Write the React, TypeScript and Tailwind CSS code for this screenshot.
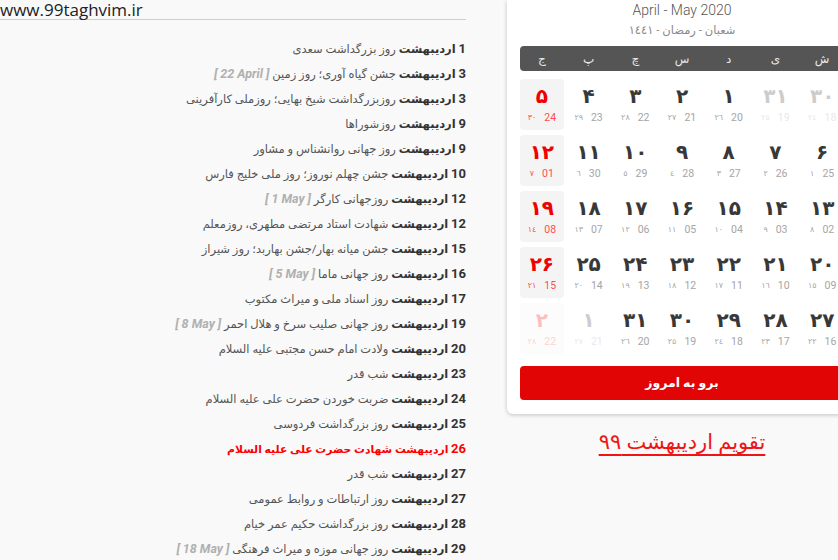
import React from "react";

const FONT = { fontFamily: 'Roboto, "DejaVu Sans", sans-serif' };

type Ev = { d: string; t: string; en?: string; red?: boolean };
const events: Ev[] = [
  { d: "1", t: "روز بزرگداشت سعدی" },
  { d: "3", t: "جشن گیاه آوری؛ روز زمین", en: "22 April" },
  { d: "3", t: "روزبزرگداشت شیخ بهایی؛ روزملی کارآفرینی" },
  { d: "9", t: "روزشوراها" },
  { d: "9", t: "روز جهانی روانشناس و مشاور" },
  { d: "10", t: "جشن چهلم نوروز؛ روز ملی خلیج فارس" },
  { d: "12", t: "روزجهانی کارگر", en: "1 May" },
  { d: "12", t: "شهادت استاد مرتضی مطهری، روزمعلم" },
  { d: "15", t: "جشن میانه بهار/جشن بهاربد؛ روز شیراز" },
  { d: "16", t: "روز جهانی ماما", en: "5 May" },
  { d: "17", t: "روز اسناد ملی و میراث مکتوب" },
  { d: "19", t: "روز جهانی صلیب سرخ و هلال احمر", en: "8 May" },
  { d: "20", t: "ولادت امام حسن مجتبی علیه السلام" },
  { d: "23", t: "شب قدر" },
  { d: "24", t: "ضربت خوردن حضرت علی علیه السلام" },
  { d: "25", t: "روز بزرگداشت فردوسی" },
  { d: "26", t: "شهادت حضرت علی علیه السلام", red: true },
  { d: "27", t: "شب قدر" },
  { d: "27", t: "روز ارتباطات و روابط عمومی" },
  { d: "28", t: "روز بزرگداشت حکیم عمر خیام" },
  { d: "29", t: "روز جهانی موزه و میراث فرهنگی", en: "18 May" },
];

const fa = (n: number) => String(n).replace(/\d/g, (c) => "۰۱۲۳۴۵۶۷۸۹"[+c]);
const ar = (n: number) => String(n).replace(/\d/g, (c) => "٠١٢٣٤٥٦٧٨٩"[+c]);
const g2 = (n: number) => (n < 10 ? "0" + n : String(n));

type Cell = { p: number; g: number; h: number; off?: boolean };
// rows in RTL order: ش ی د س چ پ ج
const rows: Cell[][] = [
  [
    { p: 30, g: 18, h: 24, off: true },
    { p: 31, g: 19, h: 25, off: true },
    { p: 1, g: 20, h: 26 },
    { p: 2, g: 21, h: 27 },
    { p: 3, g: 22, h: 28 },
    { p: 4, g: 23, h: 29 },
    { p: 5, g: 24, h: 30 },
  ],
  [6, 7, 8, 9, 10, 11, 12].map((p, i) => ({ p, g: i < 6 ? 25 + i : 1, h: 1 + i })),
  [13, 14, 15, 16, 17, 18, 19].map((p, i) => ({ p, g: 2 + i, h: 8 + i })),
  [20, 21, 22, 23, 24, 25, 26].map((p, i) => ({ p, g: 9 + i, h: 15 + i })),
  [
    { p: 27, g: 16, h: 22 },
    { p: 28, g: 17, h: 23 },
    { p: 29, g: 18, h: 24 },
    { p: 30, g: 19, h: 25 },
    { p: 31, g: 20, h: 26 },
    { p: 1, g: 21, h: 27, off: true },
    { p: 2, g: 22, h: 28, off: true },
  ],
];

const weekdays = ["ش", "ی", "د", "س", "چ", "پ", "ج"];

function DayCell({ c, fri }: { c: Cell; fri: boolean }) {
  return (
    <div
      className={
        "h-[51px] rounded-[4px] flex flex-col items-center pt-[5px] " +
        (fri ? "bg-[#f4f4f4] " : "") +
        (c.off ? "opacity-[0.25]" : "")
      }
    >
      <div
        className={
          "h-[24px] leading-[24px] text-[20px] font-bold " +
          (fri ? "text-[#f00000]" : "text-[#383838]")
        }
      >
        {fa(c.p)}
      </div>
      <div
        className={
          "mt-[3px] h-[14px] leading-[14px] flex items-center gap-[8px] " +
          (fri ? "text-[#ff4d4d]" : "text-[#a5a5a5]")
        }
      >
        <span className="text-[10.5px]">{g2(c.g)}</span>
        <span className="text-[8px]">{ar(c.h)}</span>
      </div>
    </div>
  );
}

export default function App() {
  return (
    <div
      className="w-[838px] h-[560px] overflow-hidden bg-[#f9f9f9] flex"
      style={FONT}
    >
      <div className="w-[466px] shrink-0 flex flex-col">
        <div
          className="h-[20px] border-b border-[#cfcfcf] leading-[20px] text-[17px] text-[#222] whitespace-nowrap"
          style={{ fontFamily: '"Open Sans", sans-serif' }}
        >
          www.99taghvim.ir
        </div>
        <div dir="rtl" className="pt-[16px] flex flex-col">
          {events.map((e, i) => (
            <div
              key={i}
              className={
                "h-[25px] leading-[25px] whitespace-nowrap " +
                (e.red ? "text-[#ff0000] font-bold text-[10.8px]" : "text-[#555] text-[11.5px]")
              }
            >
              <span className={e.red ? "" : "font-bold text-[#333]"}>
                <span className="text-[13px]">{e.d}</span> اردیبهشت
              </span>{" "}
              {e.t}
              {e.en && (
                <>
                  {" "}
                  <span
                    dir="ltr"
                    className="font-bold italic text-[12.5px] text-[#b0b0b0]"
                    style={{ unicodeBidi: "isolate" }}
                  >
                    [ {e.en} ]
                  </span>
                </>
              )}
            </div>
          ))}
        </div>
      </div>

      <div className="ml-[41px] w-[350px] shrink-0 flex flex-col">
        <div className="bg-white rounded-b-[6px] shadow-[0_1px_4px_rgba(0,0,0,0.22)] px-[13px] pb-[14px] flex flex-col">
          <div className="h-[20px] leading-[20px] text-center text-[14px] font-light text-[#555]">
            April - May 2020
          </div>
          <div
            dir="rtl"
            className="h-[20px] leading-[20px] text-center text-[11.5px] text-[#8a8a8a]"
          >
            شعبان - رمضان - ١٤٤١
          </div>
          <div
            dir="rtl"
            className="mt-[6px] h-[25px] rounded-[4px] bg-[#555555] grid grid-cols-7 gap-x-[3px] items-center text-center text-[12px] text-[#e8e8e8]"
          >
            {weekdays.map((w) => (
              <div key={w}>{w}</div>
            ))}
          </div>
          <div dir="rtl" className="mt-[8px] grid grid-cols-7 gap-x-[3px] gap-y-[5px]">
            {rows.map((r, ri) =>
              r.map((c, ci) => <DayCell key={ri + "-" + ci} c={c} fri={ci === 6} />)
            )}
          </div>
          <button
            dir="rtl"
            className="mt-[12px] h-[34px] rounded-[4px] bg-[#e10505] text-white text-[12.5px] font-bold"
          >
            برو به امروز
          </button>
        </div>
        <div className="mt-[14px] text-center">
          <span
            dir="rtl"
            className="text-[21px] leading-[28px] text-[#f01515] underline underline-offset-[5px] decoration-[1.5px]"
          >
            تقویم اردیبهشت ۹۹
          </span>
        </div>
      </div>
    </div>
  );
}
